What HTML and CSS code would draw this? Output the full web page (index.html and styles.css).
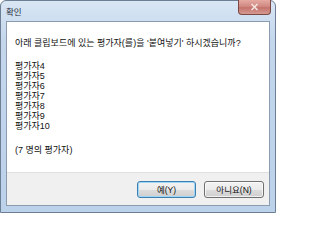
FILE: index.html
```html
<!DOCTYPE html>
<html lang="ko">
<head>
<meta charset="utf-8">
<link rel="stylesheet" href="styles.css">
</head>
<body>
<div class="window">
  <div class="titlebar">
    <span class="title">확인</span>
    <div class="close"><svg width="9" height="8" viewBox="0 0 9 8"><path d="M1.5 1 L7.5 7 M7.5 1 L1.5 7" stroke="#f4e4e2" stroke-width="1.6" fill="none"/></svg></div>
  </div>
  <div class="client">
    <div class="content">
      <p class="question">아래 클립보드에 있는 평가자(를)을 '붙여넣기' 하시겠습니까?</p>
      <ul class="list">
        <li>평가자4</li>
        <li>평가자5</li>
        <li>평가자6</li>
        <li>평가자7</li>
        <li>평가자8</li>
        <li>평가자9</li>
        <li>평가자10</li>
      </ul>
      <p class="count">(7 명의 평가자)</p>
    </div>
    <div class="footer">
      <button class="btn default">예(Y)</button>
      <button class="btn">아니요(N)</button>
    </div>
  </div>
</div>
</body>
</html>
```
FILE: styles.css
```css
* { box-sizing: border-box; }
html, body { margin: 0; padding: 0; background: #fff; }
body { width: 276px; height: 213px; overflow: hidden; font-family: "Liberation Sans", "Noto Sans CJK KR", sans-serif; }
.window {
  width: 276px; height: 213px;
  background: linear-gradient(to bottom, #d9e6f4 0px, #c3d6ec 40px, #bcd2ea 100%);
  border: 1px solid #6d7f95;
  border-radius: 6px 6px 0 0;
  display: flex; flex-direction: column;
  padding: 0 5px 6px 5px;
}
.titlebar {
  height: 20px; display: flex; align-items: flex-start; justify-content: space-between;
}
.title { font-size: 8.5px; line-height: 10px; margin-top: 6px; margin-left: 0px; color: #1e2a3a; }
.close {
  width: 33px; height: 15px; margin-top: -1px; margin-right: -1px;
  border: 1px solid #7a4944; border-top: none;
  border-radius: 0 0 4px 4px;
  background: linear-gradient(to bottom, #e5aaa3 0%, #d08a83 45%, #c4736b 55%, #d49a92 100%);
  display: flex; align-items: center; justify-content: center;
}
.close svg { display: block; }
.client {
  flex: 1; display: flex; flex-direction: column;
  border: 1px solid #8c9cb0; background: #fff;
}
.content {
  flex: 1; padding: 16px 0 0 8px; font-size: 9px; line-height: 10px; color: #111;
}
.question { margin: 0 0 13px 0; white-space: nowrap; }
.list { list-style: none; margin: 0; padding: 0; }
.count { margin: 14px 0 0 0; }
.footer {
  height: 33px; background: #f0f0f0; border-top: 1px solid #dfdfdf;
  display: flex; justify-content: flex-end; align-items: flex-start;
  gap: 8px; padding: 8px 5px 0 0;
}
.btn {
  font-family: inherit; font-size: 8.5px; line-height: 10px; color: #111;
  height: 17px; width: 60px; padding: 0;
  border: 1px solid #707070; border-radius: 3px;
  background: linear-gradient(to bottom, #f2f2f2 0%, #ebebeb 50%, #dddddd 51%, #cfcfcf 100%);
  box-shadow: inset 0 0 0 1px rgba(255,255,255,0.7);
}
.btn.default {
  width: 59px;
  border-color: #3c7fb1;
  box-shadow: inset 0 0 0 1px #9fd5f5;
}
```
